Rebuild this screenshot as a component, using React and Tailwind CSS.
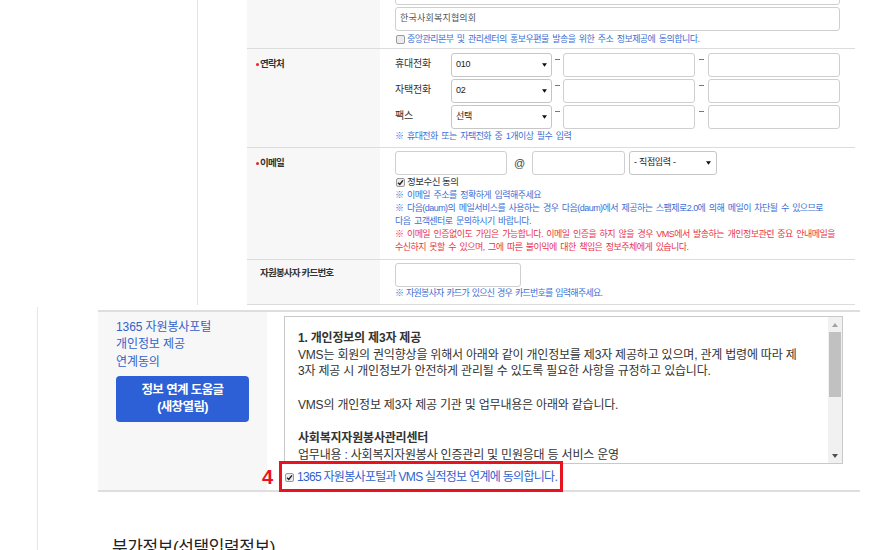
import React from "react";

const HINT =
  "whitespace-nowrap text-[9px] leading-[13px] tracking-[-0.55px] [word-spacing:1.5px] text-[#3a6fd6]";
const RED =
  "whitespace-nowrap text-[9px] leading-[13px] tracking-[-0.55px] [word-spacing:1.5px] text-[#e8334a]";

function Check({ checked }) {
  return (
    <span className="inline-flex h-[9px] w-[9px] shrink-0 items-center justify-center rounded-[2px] border border-[#9a9a9a] bg-[#ececec]">
      {checked && (
        <svg width="7" height="7" viewBox="0 0 8 8">
          <path d="M1.2 4.2 L3.2 6.2 L6.8 1.6" fill="none" stroke="#222" strokeWidth="1.7" />
        </svg>
      )}
    </span>
  );
}

function Arrow() {
  return (
    <svg width="5" height="4" viewBox="0 0 6 4">
      <path d="M0 0 H6 L3 4 Z" fill="#111" />
    </svg>
  );
}

function Select({ className, text }) {
  return (
    <div
      className={
        "flex h-[24px] shrink-0 items-center justify-between rounded-[3px] border border-[#c6c6c6] bg-white pl-[4px] pr-[4px] text-[9px] tracking-[-0.3px] text-[#222] " +
        className
      }
    >
      <span>{text}</span>
      <Arrow />
    </div>
  );
}

function Input({ className }) {
  return <div className={"h-[24px] shrink-0 rounded-[3px] border border-[#cfcfcf] bg-white " + className} />;
}

function Label({ req, className, children }) {
  return (
    <div
      className={
        "flex w-[133px] shrink-0 items-start bg-[#f7f7f7] pl-[9px] text-[9.5px] font-bold leading-[14px] tracking-[-0.8px] text-[#333] " +
        className
      }
    >
      <span className="flex h-[14px] w-[4px] shrink-0 items-center">
        {req && <span className="h-[3px] w-[3px] rounded-full bg-[#e6202e]" />}
      </span>
      <span>{children}</span>
    </div>
  );
}

function Dash({ className }) {
  return (
    <div className={"flex h-[24px] shrink-0 justify-center pt-[6px] " + className}>
      <span className="h-px w-[5px] bg-[#777]" />
    </div>
  );
}

function PhoneRow({ label, value }) {
  return (
    <div className="flex h-[24px] items-center">
      <div className="-mt-[4px] w-[56px] shrink-0 text-[10px] tracking-[-0.2px] text-[#333]">{label}</div>
      <Select className="w-[101px]" text={value} />
      <Dash className="w-[11px]" />
      <Input className="w-[132px]" />
      <Dash className="w-[13px]" />
      <Input className="w-[132px]" />
    </div>
  );
}

function Scrollbar() {
  return (
    <div className="flex w-[14px] shrink-0 flex-col bg-[#f1f1f1]">
      <div className="flex h-[15px] items-center justify-center">
        <svg width="6" height="4" viewBox="0 0 6 4">
          <path d="M0 4 H6 L3 0 Z" fill="#a3a3a3" />
        </svg>
      </div>
      <div className="mx-[1px] h-[65px] bg-[#c1c1c1]" />
      <div className="flex-1" />
      <div className="flex h-[15px] items-center justify-center">
        <svg width="6" height="4" viewBox="0 0 6 4">
          <path d="M0 0 H6 L3 4 Z" fill="#505050" />
        </svg>
      </div>
    </div>
  );
}

export default function App() {
  return (
    <div className="h-[550px] w-[891px] overflow-hidden bg-white font-['Liberation_Sans','Noto_Sans_CJK_KR',sans-serif] text-[#333]">
      {/* top form */}
      <div className="flex h-[305px]">
        <div className="w-[198px] shrink-0 border-r border-[#e4e4e4]" />
        <div className="w-[49px] shrink-0" />
        <div className="flex w-[608px] shrink-0 flex-col">
          {/* address row (partial) */}
          <div className="flex h-[49px] border-b border-[#dcdcdc]">
            <div className="w-[133px] shrink-0 bg-[#f7f7f7]" />
            <div className="flex flex-1 flex-col overflow-hidden pl-[15px]">
              <Input className="-mt-[19px] w-[445px]" />
              <div className="mt-[2px] flex h-[24px] w-[445px] shrink-0 items-center rounded-[3px] border border-[#cfcfcf] pl-[4px] text-[9px] tracking-[0.2px] text-[#555]">
                한국사회복지협의회
              </div>
              <div className="mt-[2px] flex h-[12px] items-center gap-[2px] pl-[1px]">
                <Check />
                <span className={HINT}>중앙관리본부 및 관리센터의 홍보우편물 발송을 위한 주소 정보제공에 동의합니다.</span>
              </div>
            </div>
          </div>

          {/* contact row */}
          <div className="flex h-[99px] border-b border-[#dcdcdc]">
            <Label req className="pt-[8px]">연락처</Label>
            <div className="flex flex-1 flex-col pl-[15px] pt-[4px]">
              <div className="flex flex-col gap-[2px]">
                <PhoneRow label="휴대전화" value="010" />
                <PhoneRow label="자택전화" value="02" />
                <PhoneRow label="팩스" value="선택" />
              </div>
              <p className={"mt-[1px] " + HINT}>※ 휴대전화 또는 자택전화 중 1개이상 필수 입력</p>
            </div>
          </div>

          {/* email row */}
          <div className="flex h-[112px] border-b border-[#dcdcdc]">
            <Label req className="pt-[8px]">이메일</Label>
            <div className="flex flex-1 flex-col pl-[15px] pt-[3px]">
              <div className="flex h-[24px] items-center">
                <Input className="w-[112px]" />
                <span className="w-[25px] text-center text-[11px] text-[#444]">@</span>
                <Input className="w-[93px]" />
                <span className="w-[4px]" />
                <Select className="w-[88px] pl-[3px] pr-[5px]" text="- 직접입력 -" />
              </div>
              <div className="mt-[1px] flex h-[13px] items-center gap-[2px] pl-[1px]">
                <Check checked />
                <span className="text-[9.5px] tracking-[-0.5px] text-[#333]">정보수신 동의</span>
              </div>
              <p className={HINT}>※ 이메일 주소를 정확하게 입력해주세요</p>
              <p className={HINT}>
                ※ 다음(daum)의 메일서비스를 사용하는 경우 다음(daum)에서 제공하는 스팸제로2.0에 의해 메일이 차단될 수 있으므로
              </p>
              <p className={HINT}>다음 고객센터로 문의하시기 바랍니다.</p>
              <p className={RED}>
                ※ 이메일 인증없이도 가입은 가능합니다. 이메일 인증을 하지 않을 경우 VMS에서 발송하는 개인정보관련 중요 안내메일을
              </p>
              <p className={RED}>수신하지 못할 수 있으며, 그에 따른 불이익에 대한 책임은 정보주체에게 있습니다.</p>
            </div>
          </div>

          {/* card row */}
          <div className="flex h-[45px] border-b border-[#dcdcdc]">
            <Label className="pt-[6px]">자원봉사자 카드번호</Label>
            <div className="flex flex-1 flex-col pl-[15px] pt-[3px]">
              <Input className="w-[126px]" />
              <p className={HINT + " tracking-[-0.75px] [word-spacing:1px]"}>
                ※ 자원봉사자 카드가 있으신 경우 카드번호를 입력해주세요.
              </p>
            </div>
          </div>
        </div>
      </div>

      {/* bottom section */}
      <div className="flex h-[245px]">
        <div className="mt-[2px] w-[38px] shrink-0 border-r border-[#e6e6e6]" />
        <div className="w-[60px] shrink-0" />
        <div className="flex w-[762px] shrink-0 flex-col pt-[5px]">
          <div className="flex h-[182px] border-y-2 border-[#dedede]">
            <div className="w-[169px] shrink-0 bg-[#f7f7f7] pl-[18px] pt-[7px]">
              <p className="text-[12px] leading-[17.3px] tracking-[-0.1px] text-[#3462c8]">
                1365 자원봉사포털
                <br />
                개인정보 제공
                <br />
                연계동의
              </p>
              <button className="mt-[5px] flex h-[46px] w-[133px] flex-col items-center justify-center rounded-[4px] bg-[#2d5fd6] text-[12.5px] font-bold leading-[17px] tracking-[-0.6px] text-white">
                <span>정보 연계 도움글</span>
                <span>(새창열림)</span>
              </button>
            </div>
            <div className="flex flex-1 flex-col pl-[17px] pt-[4px]">
              <div className="flex h-[148px] w-[559px] shrink-0 overflow-hidden border border-[#c9c9c9] bg-white">
                <div className="flex-1 overflow-hidden pl-[13px] pt-[13px] text-[12px] leading-[16.7px] tracking-[-0.2px] text-[#333]">
                  <p className="font-bold">1. 개인정보의 제3자 제공</p>
                  <p className="whitespace-nowrap">
                    VMS는 회원의 권익향상을 위해서 아래와 같이 개인정보를 제3자 제공하고 있으며, 관계 법령에 따라 제
                    <br />
                    3자 제공 시 개인정보가 안전하게 관리될 수 있도록 필요한 사항을 규정하고 있습니다.
                  </p>
                  <p>&nbsp;</p>
                  <p className="whitespace-nowrap">VMS의 개인정보 제3자 제공 기관 및 업무내용은 아래와 같습니다.</p>
                  <p>&nbsp;</p>
                  <p className="font-bold">사회복지자원봉사관리센터</p>
                  <p className="whitespace-nowrap">업무내용 : 사회복지자원봉사 인증관리 및 민원응대 등 서비스 운영</p>
                </div>
                <Scrollbar />
              </div>
              <div className="relative flex h-[26px] items-center gap-[3px] pl-[1px]">
                <Check checked />
                <span className="text-[12px] tracking-[-0.7px] text-[#2f61d0]">
                  1365 자원봉사포털과 VMS 실적정보 연계에 동의합니다.
                </span>
                <div className="pointer-events-none absolute left-[-5px] top-[-3px] h-[31px] w-[284px] border-[3px] border-[#e8131f]" />
                <span className="absolute left-[-22px] top-[3px] font-['Liberation_Sans',sans-serif] text-[20px] font-bold leading-[20px] text-[#e8131f]">
                  4
                </span>
              </div>
            </div>
          </div>
          <div className="mt-[44px] flex items-center">
            <div className="flex w-[14px] shrink-0 items-center pt-[10px]">
              <svg width="4" height="6" viewBox="0 0 4 6">
                <path d="M0 0 L4 3 L0 6 Z" fill="#4a3d7a" />
              </svg>
            </div>
            <h2 className="text-[17px] leading-[24px] tracking-[-0.4px] text-[#222]">부가정보(선택입력정보)</h2>
          </div>
        </div>
      </div>
    </div>
  );
}
